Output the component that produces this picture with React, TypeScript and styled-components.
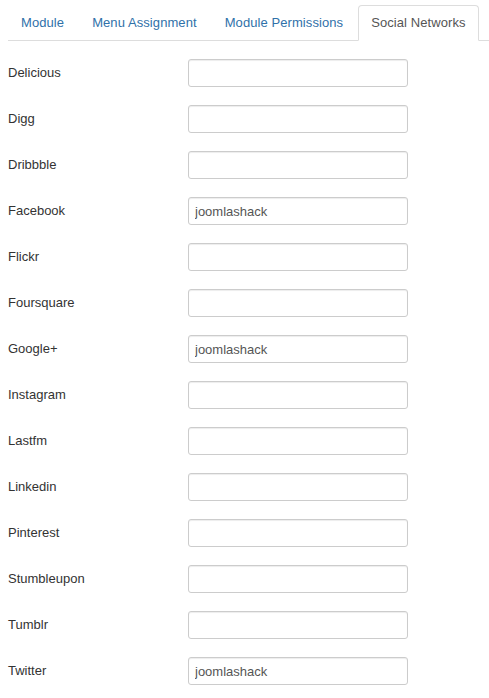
import React from "react";
import styled, { createGlobalStyle } from "styled-components";

const Global = createGlobalStyle`
  html, body { margin: 0; padding: 0; background: #fff; }
  body {
    font-family: "Liberation Sans", Arial, Helvetica, sans-serif;
    font-size: 13px;
    line-height: 18px;
    color: #333;
  }
`;

const Page = styled.div`
  padding: 5px 0 0 8px;
`;

const Tabs = styled.ul`
  display: flex;
  list-style: none;
  margin: 0 0 18px 0;
  padding: 0;
  border-bottom: 1px solid #ddd;
`;

const TabItem = styled.li`
  margin-bottom: -1px;
  margin-right: 2px;
`;

const TabLink = styled.a<{ $active?: boolean }>`
  display: block;
  padding: 8px 12px;
  line-height: 18px;
  letter-spacing: 0.08px;
  border: 1px solid ${(p) => (p.$active ? "#ddd" : "transparent")};
  border-bottom-color: ${(p) => (p.$active ? "#fff" : "transparent")};
  border-radius: 4px 4px 0 0;
  background: ${(p) => (p.$active ? "#fff" : "transparent")};
  color: ${(p) => (p.$active ? "#555" : "#3071a9")};
  text-decoration: none;
  cursor: pointer;
`;

const Form = styled.div`
  display: flex;
  flex-direction: column;
  gap: 18px;
`;

const Row = styled.div`
  display: grid;
  grid-template-columns: 180px 220px;
  align-items: center;
`;

const Label = styled.label`
  color: #333;
  font-weight: normal;
`;

const Input = styled.input`
  box-sizing: border-box;
  width: 220px;
  height: 28px;
  padding: 4px 6px;
  font-family: inherit;
  font-size: 13px;
  line-height: 18px;
  color: #555;
  background: #fff;
  border: 1px solid #ccc;
  border-radius: 3px;
  box-shadow: inset 0 1px 1px rgba(0, 0, 0, 0.075);
  outline: none;
`;

const tabs = ["Module", "Menu Assignment", "Module Permissions", "Social Networks"];

const fields: [string, string][] = [
  ["Delicious", ""],
  ["Digg", ""],
  ["Dribbble", ""],
  ["Facebook", "joomlashack"],
  ["Flickr", ""],
  ["Foursquare", ""],
  ["Google+", "joomlashack"],
  ["Instagram", ""],
  ["Lastfm", ""],
  ["Linkedin", ""],
  ["Pinterest", ""],
  ["Stumbleupon", ""],
  ["Tumblr", ""],
  ["Twitter", "joomlashack"],
];

export default function App() {
  return (
    <Page>
      <Global />
      <Tabs>
        {tabs.map((t) => (
          <TabItem key={t}>
            <TabLink $active={t === "Social Networks"}>{t}</TabLink>
          </TabItem>
        ))}
      </Tabs>
      <Form>
        {fields.map(([name, value]) => (
          <Row key={name}>
            <Label>{name}</Label>
            <Input type="text" defaultValue={value} />
          </Row>
        ))}
      </Form>
    </Page>
  );
}
